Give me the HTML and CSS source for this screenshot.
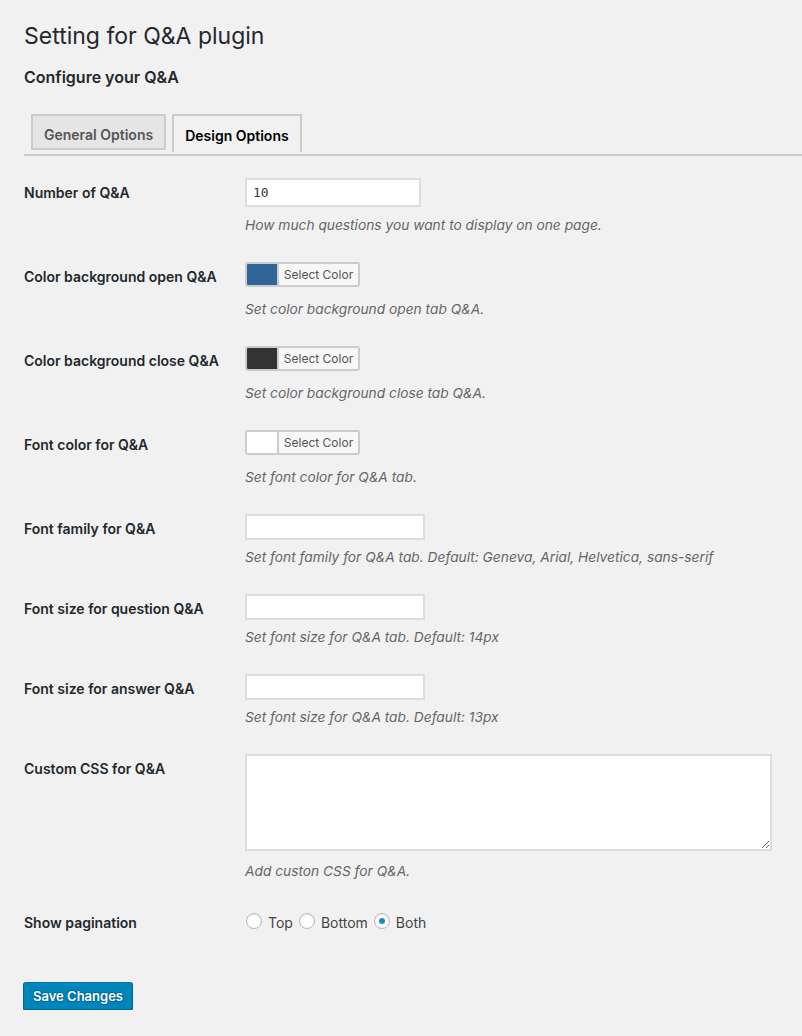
FILE: index.html
```html
<!DOCTYPE html>
<html lang="en">
<head>
<meta charset="utf-8">
<title>Setting for Q&amp;A plugin</title>
<link rel="stylesheet" href="styles.css">
</head>
<body>
<div class="wrap">
  <h1 class="title">Setting for Q&amp;A plugin</h1>
  <h2 class="subtitle">Configure your Q&amp;A</h2>
  <nav class="tabs">
    <a class="tab">General Options</a>
    <a class="tab tab-active">Design Options</a>
  </nav>
  <form class="form">
    <div class="row">
      <label class="lbl">Number of Q&amp;A</label>
      <div class="field">
        <input class="num" type="text" value="10">
        <p class="desc">How much questions you want to display on one page.</p>
      </div>
    </div>
    <div class="row">
      <label class="lbl">Color background open Q&amp;A</label>
      <div class="field">
        <div class="picker"><span class="swatch swatch-blue"></span><span class="pick-text">Select Color</span></div>
        <p class="desc">Set color background open tab Q&amp;A.</p>
      </div>
    </div>
    <div class="row">
      <label class="lbl">Color background close Q&amp;A</label>
      <div class="field">
        <div class="picker"><span class="swatch swatch-dark"></span><span class="pick-text">Select Color</span></div>
        <p class="desc">Set color background close tab Q&amp;A.</p>
      </div>
    </div>
    <div class="row">
      <label class="lbl">Font color for Q&amp;A</label>
      <div class="field">
        <div class="picker"><span class="swatch swatch-white"></span><span class="pick-text">Select Color</span></div>
        <p class="desc">Set font color for Q&amp;A tab.</p>
      </div>
    </div>
    <div class="row">
      <label class="lbl">Font family for Q&amp;A</label>
      <div class="field">
        <input class="txt" type="text">
        <p class="desc">Set font family for Q&amp;A tab. Default: Geneva, Arial, Helvetica, sans-serif</p>
      </div>
    </div>
    <div class="row">
      <label class="lbl">Font size for question Q&amp;A</label>
      <div class="field">
        <input class="txt" type="text">
        <p class="desc">Set font size for Q&amp;A tab. Default: 14px</p>
      </div>
    </div>
    <div class="row">
      <label class="lbl">Font size for answer Q&amp;A</label>
      <div class="field">
        <input class="txt" type="text">
        <p class="desc">Set font size for Q&amp;A tab. Default: 13px</p>
      </div>
    </div>
    <div class="row">
      <label class="lbl">Custom CSS for Q&amp;A</label>
      <div class="field">
        <textarea class="area"></textarea>
        <p class="desc">Add custon CSS for Q&amp;A.</p>
      </div>
    </div>
    <div class="row">
      <label class="lbl">Show pagination</label>
      <div class="field radios">
        <label class="opt"><input class="radio" type="radio" name="pag">Top</label>
        <label class="opt"><input class="radio" type="radio" name="pag">Bottom</label>
        <label class="opt"><input class="radio" type="radio" name="pag" checked>Both</label>
      </div>
    </div>
  </form>
  <button class="save" type="button">Save Changes</button>
</div>
</body>
</html>
```

FILE: styles.css
```css
html, body {
  margin: 0;
  padding: 0;
  background: #f1f1f1;
}
body {
  font-family: Inter, "Liberation Sans", sans-serif;
  color: #23282d;
  font-size: 14px;
}
.wrap {
  padding: 21px 0 0 24px;
}
.title {
  margin: 0;
  font-size: 23px;
  line-height: 30px;
  font-weight: 400;
  color: #23282d;
}
.subtitle {
  margin: 15px 0 0;
  font-size: 16px;
  line-height: 22px;
  font-weight: 600;
  color: #23282d;
}
.tabs {
  margin-top: 26px;
  display: flex;
  align-items: flex-start;
  gap: 6px;
  padding: 0 0 2px 7px;
  border-bottom: 2px solid #cccccc;
}
.tab {
  box-sizing: border-box;
  height: 36px;
  padding: 4px 11px 0;
  display: flex;
  align-items: center;
  border: 2px solid #cccccc;
  background: #e5e5e5;
  color: #555555;
  font-size: 14px;
  font-weight: 600;
}
.tab-active {
  height: 38px;
  border-bottom: none;
  padding-bottom: 2px;
  background: #f1f1f1;
  color: #000000;
}
.form {
  padding-top: 22px;
  display: flex;
  flex-direction: column;
  gap: 27px;
}
.row {
  display: flex;
  align-items: flex-start;
}
.lbl {
  width: 221px;
  flex: none;
  padding-top: 5px;
  line-height: 20px;
  font-size: 14px;
  font-weight: 600;
  color: #23282d;
}
.field {
  display: flex;
  flex-direction: column;
  align-items: flex-start;
}
.desc {
  margin: 7px 0 0;
  line-height: 20px;
  font-size: 13.75px;
  font-style: italic;
  color: #666666;
}
.num, .txt, .area {
  box-sizing: border-box;
  margin: 0;
  border: 2px solid #dddddd;
  background: #ffffff;
  outline: none;
  border-radius: 0;
}
.num {
  width: 176px;
  height: 29px;
  margin-bottom: 1px;
  padding: 0 6px;
  font-family: "DejaVu Sans Mono", "Liberation Mono", monospace;
  font-size: 13px;
  color: #32373c;
}
.txt {
  width: 180px;
  height: 26px;
}
.area {
  width: 527px;
  height: 97px;
  margin-bottom: 3px;
  resize: both;
  display: block;
}
.picker {
  box-sizing: border-box;
  width: 115px;
  height: 25px;
  margin-bottom: 5px;
  display: flex;
  border: 2px solid #cccccc;
  border-radius: 3px;
  overflow: hidden;
}
.swatch {
  width: 30px;
  flex: none;
  border-right: 2px solid #cccccc;
}
.swatch-blue { background: #2f6597; }
.swatch-dark { background: #333333; }
.swatch-white { background: #ffffff; }
.pick-text {
  flex: 1;
  background: #f7f7f7;
  color: #555555;
  font-size: 12px;
  display: flex;
  align-items: center;
  justify-content: center;
}
.radios {
  flex-direction: row;
  align-items: center;
  height: 28px;
  gap: 5px;
}
.opt {
  display: inline-flex;
  align-items: center;
  gap: 6px;
  font-size: 14px;
  color: #444444;
}
.radio {
  appearance: none;
  -webkit-appearance: none;
  margin: -3px 0 0 1px;
  width: 16px;
  height: 16px;
  box-sizing: border-box;
  border: 1px solid #b4b9be;
  border-radius: 50%;
  background: #ffffff;
  box-shadow: inset 0 1px 2px rgba(0, 0, 0, 0.1);
  display: inline-flex;
  align-items: center;
  justify-content: center;
}
.radio:checked::before {
  content: "";
  width: 6px;
  height: 6px;
  border-radius: 50%;
  background: #1e8cbe;
}
.save {
  margin-top: 46px;
  margin-left: -1px;
  box-sizing: border-box;
  width: 110px;
  height: 28px;
  padding: 0;
  border: 1px solid #0073aa;
  border-color: #0073aa #006799 #006799;
  border-radius: 3px;
  background: #0085ba;
  box-shadow: 0 1px 0 #006799;
  color: #ffffff;
  font-family: Inter, "Liberation Sans", sans-serif;
  font-size: 13px;
  font-weight: 600;
  text-shadow: 0 -1px 1px #006799, 1px 0 1px #006799, 0 1px 1px #006799, -1px 0 1px #006799;
}
```
